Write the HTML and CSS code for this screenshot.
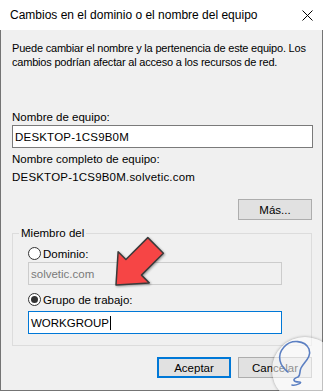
FILE: index.html
```html
<!DOCTYPE html>
<html lang="es">
<head>
<meta charset="utf-8">
<link rel="stylesheet" href="styles.css">
</head>
<body>
<div class="window">
  <div class="titlebar">
    <span class="title">Cambios en el dominio o el nombre del equipo</span>
    <svg class="close" width="11" height="11" viewBox="0 0 11 11"><path d="M0.5 0.5 L10.5 10.5 M10.5 0.5 L0.5 10.5" stroke="#000" stroke-width="1" fill="none"/></svg>
  </div>
  <div class="body">
    <p class="desc">Puede cambiar el nombre y la pertenencia de este equipo. Los<br>cambios podrían afectar al acceso a los recursos de red.</p>
    <p class="label first">Nombre de equipo:</p>
    <div class="input main">DESKTOP-1CS9B0M</div>
    <p class="label second">Nombre completo de equipo:</p>
    <p class="label third">DESKTOP-1CS9B0M.solvetic.com</p>
    <div class="more-row"><button class="btn">Más...</button></div>
    <fieldset class="group">
      <legend>Miembro del</legend>
      <div class="group-inner">
        <div class="radio-row r1"><span class="radio"></span><span>Dominio:</span></div>
        <div class="input disabled">solvetic.com</div>
        <div class="radio-row r2"><span class="radio checked"></span><span>Grupo de trabajo:</span></div>
        <div class="input focus">WORKGROUP<span class="caret"></span></div>
      </div>
    </fieldset>
    <div class="actions">
      <button class="btn primary">Aceptar</button>
      <button class="btn">Cancelar</button>
    </div>
  </div>
  <svg class="arrow" width="80" height="75" viewBox="0 0 80 75">
    <polygon transform="translate(16 60) rotate(135)" points="0,0 -25,-22 -25,-11 -56,-11 -56,11 -25,11 -25,22" fill="#f64545" stroke="#3a3a3a" stroke-width="1.5" stroke-linejoin="round"/>
  </svg>
  <div class="watermark">
    <svg width="66" height="66" viewBox="0 0 66 66">
      <path transform="translate(-272 -337)" d="M288 372 C280 366 276 356 284 347 C291 339 305 340 309 349 C312 357 304 362 301 368 C299 372 301 375 298 377 C292 379 293 382 299 382 C304 382 296 386 292 385" fill="none" stroke="#5b7fc2" stroke-width="1.6" stroke-linecap="round"/>
    </svg>
  </div>
</div>
</body>
</html>
```

FILE: styles.css
```css
* { box-sizing: border-box; }
html, body { margin: 0; padding: 0; }
body {
  font-family: "Liberation Sans", Arial, sans-serif;
  font-size: 11.5px;
  color: #000;
  background: #fff;
}
.window {
  position: relative;
  width: 323px;
  height: 391px;
  overflow: hidden;
  display: flex;
  flex-direction: column;
}
.titlebar {
  height: 30px;
  flex: none;
  background: #fff;
  display: flex;
  align-items: center;
  justify-content: space-between;
  padding: 0 10px 0 10px;
}
.title {
  font-size: 12px;
  line-height: 14px;
  margin-top: -1px;
}
.close { display: block; margin-top: 0; }
.body {
  flex: 1;
  background: #f0f0f0;
  border-left: 1px solid #747474;
  border-right: 1px solid #747474;
  border-bottom: 1px solid #747474;
  padding: 0 9px 0 11px;
}
p { margin: 0; }
.desc {
  margin-top: 11px;
  font-size: 11px;
  line-height: 14px;
  white-space: nowrap;
  letter-spacing: -0.2px;
}
.label { line-height: 14px; }
.label.first { margin-top: 41px; }
.label.second { margin-top: 4px; }
.label.third { margin-top: 4px; letter-spacing: 0.2px; }
.input {
  height: 23px;
  border: 1px solid #7a7a7a;
  background: #fff;
  padding: 0 2px;
  display: flex;
  align-items: center;
  line-height: 14px;
}
.input.main { margin-top: 1px; letter-spacing: 0.2px; }
.input.disabled {
  margin-top: 1px;
  width: 254px;
  border-color: #cccccc;
  background: #f0f0f0;
  color: #7a7a7a;
}
.input.focus {
  margin-top: 4px;
  width: 254px;
  border-color: #0078d7;
}
.caret {
  display: inline-block;
  width: 1px;
  height: 14px;
  background: #000;
  margin-left: 1px;
}
.more-row {
  margin-top: 15px;
  display: flex;
  justify-content: flex-end;
  padding-right: 1px;
}
.btn {
  font-family: inherit;
  font-size: 11.5px;
  color: #000;
  width: 74px;
  height: 21px;
  padding: 0;
  background: #e1e1e1;
  border: 1px solid #adadad;
  border-radius: 0;
  line-height: 14px;
}
.btn.primary { border: 2px solid #0078d7; }
.group {
  margin: 6px 1px 0 0;
  padding: 0 0 11px 0;
  border: 1px solid #dcdcdc;
  min-width: 0;
}
.group legend {
  margin-left: 6px;
  padding: 0 2px;
  line-height: 14px;
}
.group-inner { padding-left: 15px; }
.radio-row {
  height: 15px;
  display: flex;
  align-items: center;
  gap: 2px;
  line-height: 14px;
}
.radio-row.r1 { margin-top: 6px; }
.radio-row.r2 { margin-top: 7px; }
.radio {
  width: 13px;
  height: 13px;
  border: 1px solid #333;
  border-radius: 50%;
  background: #fff;
  display: flex;
  align-items: center;
  justify-content: center;
  flex: none;
}
.radio.checked::after {
  content: "";
  width: 7px;
  height: 7px;
  border-radius: 50%;
  background: #333;
}
.actions {
  margin-top: 11px;
  display: flex;
  justify-content: flex-end;
  gap: 7px;
  padding-right: 1px;
}
.arrow {
  position: absolute;
  left: 100px;
  top: 225px;
  filter: drop-shadow(1px 1px 1px rgba(0,0,0,0.35));
}
.watermark {
  position: absolute;
  left: 272px;
  top: 337px;
  width: 66px;
  height: 66px;
  border-radius: 50%;
  background: rgba(255,255,255,0.55);
  box-shadow: 0 0 3px rgba(0,0,0,0.35);
}
.watermark svg { display: block; }
```
